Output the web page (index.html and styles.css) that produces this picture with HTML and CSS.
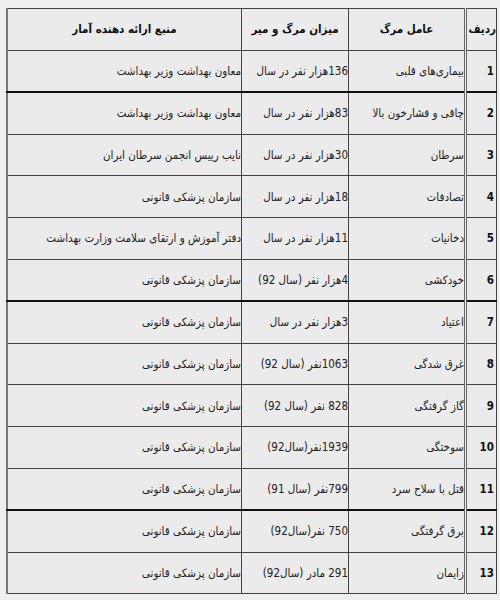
FILE: index.html
```html
<!DOCTYPE html>
<html lang="fa" dir="rtl">
<head>
<meta charset="utf-8">
<link rel="stylesheet" href="styles.css">
</head>
<body>
<table class="stats">
  <colgroup>
    <col class="c-num"><col class="c-cause"><col class="c-rate"><col class="c-src">
  </colgroup>
  <thead>
    <tr><th>ردیف</th><th>عامل مرگ</th><th>میزان مرگ و میر</th><th>منبع ارائه دهنده آمار</th></tr>
  </thead>
  <tbody>
    <tr class="thick"><td class="n">1</td><td>بیماری‌های قلبی</td><td>136هزار نفر در سال</td><td>معاون بهداشت وزیر بهداشت</td></tr>
    <tr><td class="n">2</td><td>چاقی و فشارخون بالا</td><td>83هزار نفر در سال</td><td>معاون بهداشت وزیر بهداشت</td></tr>
    <tr><td class="n">3</td><td>سرطان</td><td>30هزار نفر در سال</td><td>نایب رییس انجمن سرطان ایران</td></tr>
    <tr><td class="n">4</td><td>تصادفات</td><td>18هزار نفر در سال</td><td>سازمان پزشکی قانونی</td></tr>
    <tr><td class="n">5</td><td>دخانیات</td><td>11هزار نفر در سال</td><td>دفتر آموزش و ارتقای سلامت وزارت بهداشت</td></tr>
    <tr class="thick"><td class="n">6</td><td>خودکشی</td><td>4هزار نفر (سال 92)</td><td>سازمان پزشکی قانونی</td></tr>
    <tr><td class="n">7</td><td>اعتیاد</td><td>3هزار نفر در سال</td><td>سازمان پزشکی قانونی</td></tr>
    <tr><td class="n">8</td><td>غرق شدگی</td><td>1063نفر (سال 92)</td><td>سازمان پزشکی قانونی</td></tr>
    <tr><td class="n">9</td><td>گاز گرفتگی</td><td>828 نفر (سال 92)</td><td>سازمان پزشکی قانونی</td></tr>
    <tr><td class="n">10</td><td>سوختگی</td><td>1939نفر(سال92)</td><td>سازمان پزشکی قانونی</td></tr>
    <tr class="thick"><td class="n">11</td><td>قتل با سلاح سرد</td><td>799نفر (سال 91)</td><td>سازمان پزشکی قانونی</td></tr>
    <tr><td class="n">12</td><td>برق گرفتگی</td><td>750 نفر(سال92)</td><td>سازمان پزشکی قانونی</td></tr>
    <tr><td class="n">13</td><td>زایمان</td><td>291 مادر (سال92)</td><td>سازمان پزشکی قانونی</td></tr>
  </tbody>
</table>
</body>
</html>
```

FILE: styles.css
```css
html, body {
  background: #efefef;
}
body {
  margin: 8px 3px 0 6px;
  font-family: "DejaVu Sans Condensed", "DejaVu Sans", sans-serif;
  font-size: 11.5px;
  color: #222;
}
.stats {
  width: 491px;
  border-collapse: collapse;
  table-layout: fixed;
  background: #ebebeb;
  border-top: 1px solid #333;
  border-right: 1px solid #555;
  border-left: 2px solid #777;
  border-bottom: 1px solid #333;
}
.c-num { width: 31px; }
.c-cause { width: 117px; }
.c-rate { width: 107px; }
.c-src { width: auto; }
.stats th, .stats td {
  border: 1px solid #444;
  height: 40.6px;
  padding: 0;
  white-space: nowrap;
  overflow: hidden;
}
.stats th {
  font-weight: bold;
  text-align: center;
  color: #111;
}
.stats th:first-child {
  text-align: right;
  border-left: 3px double #666;
}
.stats td {
  text-align: right;
}
.stats td.n {
  font-weight: bold;
  color: #111;
  padding-right: 2px;
  border-left: 3px double #666;
}
.stats tr.thick td {
  border-bottom: 2px solid #111;
}
```
